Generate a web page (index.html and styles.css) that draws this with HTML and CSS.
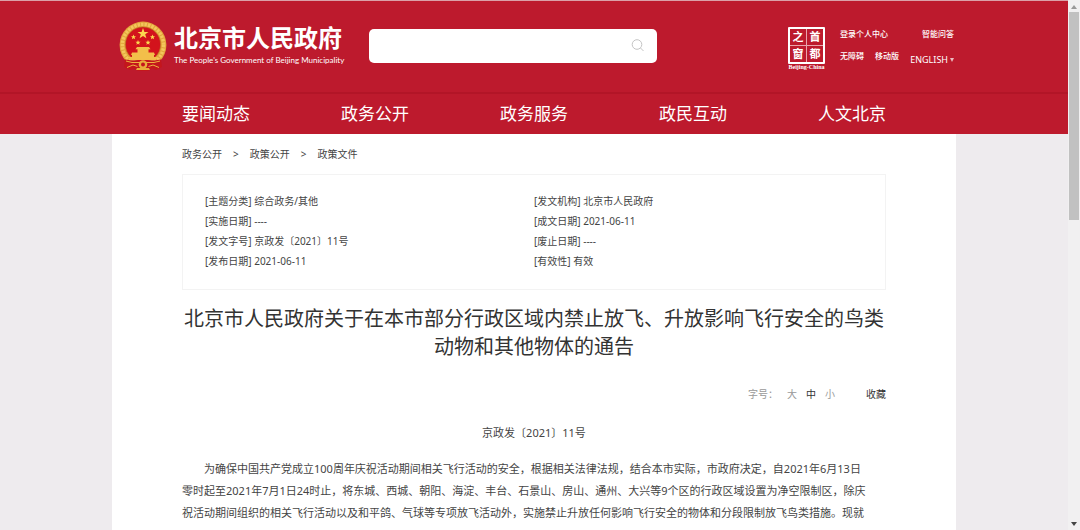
FILE: index.html
```html
<!DOCTYPE html>
<html lang="zh-CN">
<head>
  <meta charset="UTF-8">
  <meta name="viewport" content="width=device-width, initial-scale=1.0">
  <title>北京市人民政府</title>
  <link rel="stylesheet" href="styles.css">
</head>
<body>
  <div class="window">
    <div class="page">
      <header class="header">
        <div class="top">
          <a class="logo" href="#">
            <svg class="emblem" viewBox="0 0 48 50" aria-hidden="true">
              <circle cx="24" cy="24" r="23.4" fill="#e3a63c"/>
              <circle cx="24" cy="24" r="20.6" fill="none" stroke="#f3c75c" stroke-width="3.4" stroke-dasharray="2.4 1.1"/>
              <circle cx="24" cy="23.5" r="17.6" fill="#d3131c" stroke="#b97822" stroke-width=".6"/>
              <path fill="#fbd94f" d="M24 7l1.4 3.9h4.1l-3.3 2.4 1.2 4-3.4-2.4-3.4 2.4 1.2-4-3.3-2.4h4.1z"/>
              <path id="star" fill="#fbd94f" d="M14.5 13.5l.7 1.7h1.8l-1.4 1.2.5 1.8-1.6-1-1.6 1 .5-1.8-1.4-1.2h1.8z"/>
              <use href="#star" x="19"/>
              <use href="#star" x="4.5" y="5.5"/>
              <use href="#star" x="14.5" y="5.5"/>
              <path fill="#f3bf4a" d="M18 26h12l1.500 2.200h-15zM18.500 28h11v3.500h-11zM13 31.500h22l1 2.500H12zM13 34h22v2.500H13zM9.500 36h29l-2 3h-25z"/>
              <path fill="#c4161c" d="M6 38.500l7 1h22l7-1 1 7.500-6 3-4-1.500-4 2.500H19l-4-2.500-4 1.500-6-3z"/>
              <path fill="none" stroke="#eeb23f" stroke-width="1" d="M7 40l6 1.500h22l6-1.500M8 46.500l6-2.500 4.500 1.500M40 46.500l-6-2.500-4.500 1.500"/>
              <circle cx="24" cy="43.500" r="4.300" fill="#e9ad3b"/>
              <circle cx="24" cy="43.500" r="2" fill="#c4161c"/>
              <path fill="#e9ad3b" d="M18 47h12l1 2H17z"/>
            </svg>
            <span class="logo-text">
              <strong>北京市人民政府</strong>
              <small>The People's Government of Beijing Municipality</small>
            </span>
          </a>
          <form class="search">
            <input type="text" aria-label="搜索">
            <button type="button" aria-label="搜索">
              <svg viewBox="0 0 13 13"><circle cx="6" cy="5.500" r="4.800"/><path d="M9.500 9l3 3"/></svg>
            </button>
          </form>
          <a class="seal" href="#">
            <span class="seal-box"><i>之</i><i>首</i><i>窗</i><i>都</i></span>
            <span class="seal-name">Beijing-China</span>
          </a>
          <div class="tools">
            <div class="tools-row"><a href="#">登录个人中心</a><a href="#">智能问答</a></div>
            <div class="tools-row">
              <a href="#">无障碍</a><a href="#">移动版</a>
              <a class="english" href="#">ENGLISH <svg viewBox="0 0 4 4"><path d="M0 0h4L2 4z"/></svg></a>
            </div>
          </div>
        </div>
        <nav class="nav">
          <div class="nav-inner">
            <a href="#">要闻动态</a>
            <a href="#">政务公开</a>
            <a href="#">政务服务</a>
            <a href="#">政民互动</a>
            <a href="#">人文北京</a>
          </div>
        </nav>
      </header>

      <main class="main">
        <div class="crumbs">
          <a href="#">政务公开</a><span>&gt;</span><a href="#">政策公开</a><span>&gt;</span><a href="#">政策文件</a>
        </div>

        <div class="info">
          <ul>
            <li>[主题分类] 综合政务/其他</li>
            <li>[实施日期] ----</li>
            <li>[发文字号] 京政发〔2021〕11号</li>
            <li>[发布日期] 2021-06-11</li>
          </ul>
          <ul>
            <li>[发文机构] 北京市人民政府</li>
            <li>[成文日期] 2021-06-11</li>
            <li>[废止日期] ----</li>
            <li>[有效性] 有效</li>
          </ul>
        </div>

        <h1>北京市人民政府关于在本市部分行政区域内禁止放飞、升放影响飞行安全的鸟类<br>动物和其他物体的通告</h1>

        <div class="actions">
          <span>字号：</span>
          <button type="button">大</button>
          <button type="button" class="on">中</button>
          <button type="button">小</button>
          <button type="button" class="on fav">收藏</button>
        </div>

        <p class="number">京政发〔2021〕11号</p>
        <p class="text">为确保中国共产党成立100周年庆祝活动期间相关飞行活动的安全，根据相关法律法规，结合本市实际，市政府决定，自2021年6月13日<br>零时起至2021年7月1日24时止，将东城、西城、朝阳、海淀、丰台、石景山、房山、通州、大兴等9个区的行政区域设置为净空限制区，除庆<br>祝活动期间组织的相关飞行活动以及和平鸽、气球等专项放飞活动外，实施禁止升放任何影响飞行安全的物体和分段限制放飞鸟类措施。现就</p>
      </main>
    </div>

    <div class="scrollbar" aria-hidden="true">
      <svg viewBox="0 0 6 4"><path d="M0 4h6L3 0z" fill="#999"/></svg>
      <div class="thumb"></div>
      <svg viewBox="0 0 6 4"><path d="M0 0h6L3 4z" fill="#444"/></svg>
    </div>
  </div>
</body>
</html>
```

FILE: styles.css
```css
* { box-sizing: border-box; }
body { margin: 0; font-family: 'Noto Sans', 'Noto Sans CJK SC', sans-serif; font-size: 10px; line-height: 20px; color: #444; background: #eeebee; }
a { color: inherit; text-decoration: none; }
ul { list-style: none; margin: 0; padding: 0; }
button { font: inherit; color: inherit; background: none; border: none; padding: 0; cursor: pointer; }
svg { display: block; }

.window { display: flex; height: 100vh; overflow: hidden; }
.page { flex: 1; display: flex; flex-direction: column; min-width: 0; }

/* header */
.header { flex: none; background: #bd1a2d; color: #fff; border-top: 1px solid #dba0a8; }
.top { display: flex; align-items: center; max-width: 844px; height: 91px; margin: 0 auto; padding: 0 2px 2px 7px; }
.logo { display: flex; align-items: center; gap: 7px; width: 250px; }
.emblem { width: 48px; height: 50px; }
.logo-text { display: flex; flex-direction: column; white-space: nowrap; }
.logo-text strong { font-size: 24px; line-height: 28px; }
.logo-text small { font-family: Lato, sans-serif; font-size: 8px; line-height: 16px; }

.search { display: flex; align-items: center; flex: 0 1 288px; height: 34px; background: #fff; border-radius: 5px; padding-right: 13px; }
.search input { flex: 1; min-width: 0; height: 100%; padding: 0 12px; border: none; outline: none; background: none; }
.search svg { width: 13px; height: 13px; fill: none; stroke: #c4c4c4; }

.seal { display: flex; flex-direction: column; align-items: center; width: 39px; margin-left: auto; padding-top: 6px; }
.seal-box { display: grid; grid-template-columns: 1fr 1fr; gap: 1px; width: 37px; border: 2px solid #fff; border-radius: 1px; background: #e9a3ab; }
.seal-box i { background: #bd1a2d; font-size: 11px; font-weight: bold; line-height: 16px; font-style: normal; text-align: center; }
.seal-name { font-family: 'Liberation Serif', serif; font-size: 6px; font-weight: bold; line-height: 6px; }

.tools { width: 114px; margin-left: 14px; padding-top: 2px; font-size: 8px; font-weight: 500; }
.tools-row { display: flex; justify-content: space-between; line-height: 22px; white-space: nowrap; }
.english { display: flex; align-items: center; gap: 2px; padding-top: 4px; font-size: 9px; font-weight: 400; }
.english svg { width: 4px; height: 4px; fill: #fff; opacity: .7; }

.nav { border-top: 2px solid #b21527; }
.nav-inner { display: flex; justify-content: space-between; max-width: 704px; margin: 0 auto; font-size: 17px; line-height: 40px; }

/* content */
.main { flex: 1; width: 100%; max-width: 844px; margin: 0 auto; padding: 10px 70px 0; background: #fff; }
.crumbs { display: flex; gap: 11px; }
.info { display: grid; grid-template-columns: 329px 1fr; margin-top: 10px; padding: 16px 22px 18px; border: 1px solid #f3f3f3; }
h1 { margin: 15px 0 0; font-size: 20px; font-weight: 400; line-height: 28px; text-align: center; white-space: nowrap; color: #333; }
.actions { display: flex; justify-content: flex-end; gap: 9px; margin-top: 23px; color: #999; }
.actions .on { color: #333; }
.actions .fav { margin-left: 22px; }
.number { margin: 19px 0 0; font-size: 11px; text-align: center; }
.text { margin: 15px 0 0; font-size: 11px; line-height: 22px; text-indent: 2em; white-space: nowrap; }

/* scrollbar */
.scrollbar { flex: none; display: flex; flex-direction: column; align-items: center; width: 12px; padding: 5px 0 4px; background: #f1f0f1; }
.scrollbar svg { width: 6px; height: 4px; }
.thumb { width: 10px; height: 40%; margin: 3px 0 auto; background: #c1c1c1; }
```
